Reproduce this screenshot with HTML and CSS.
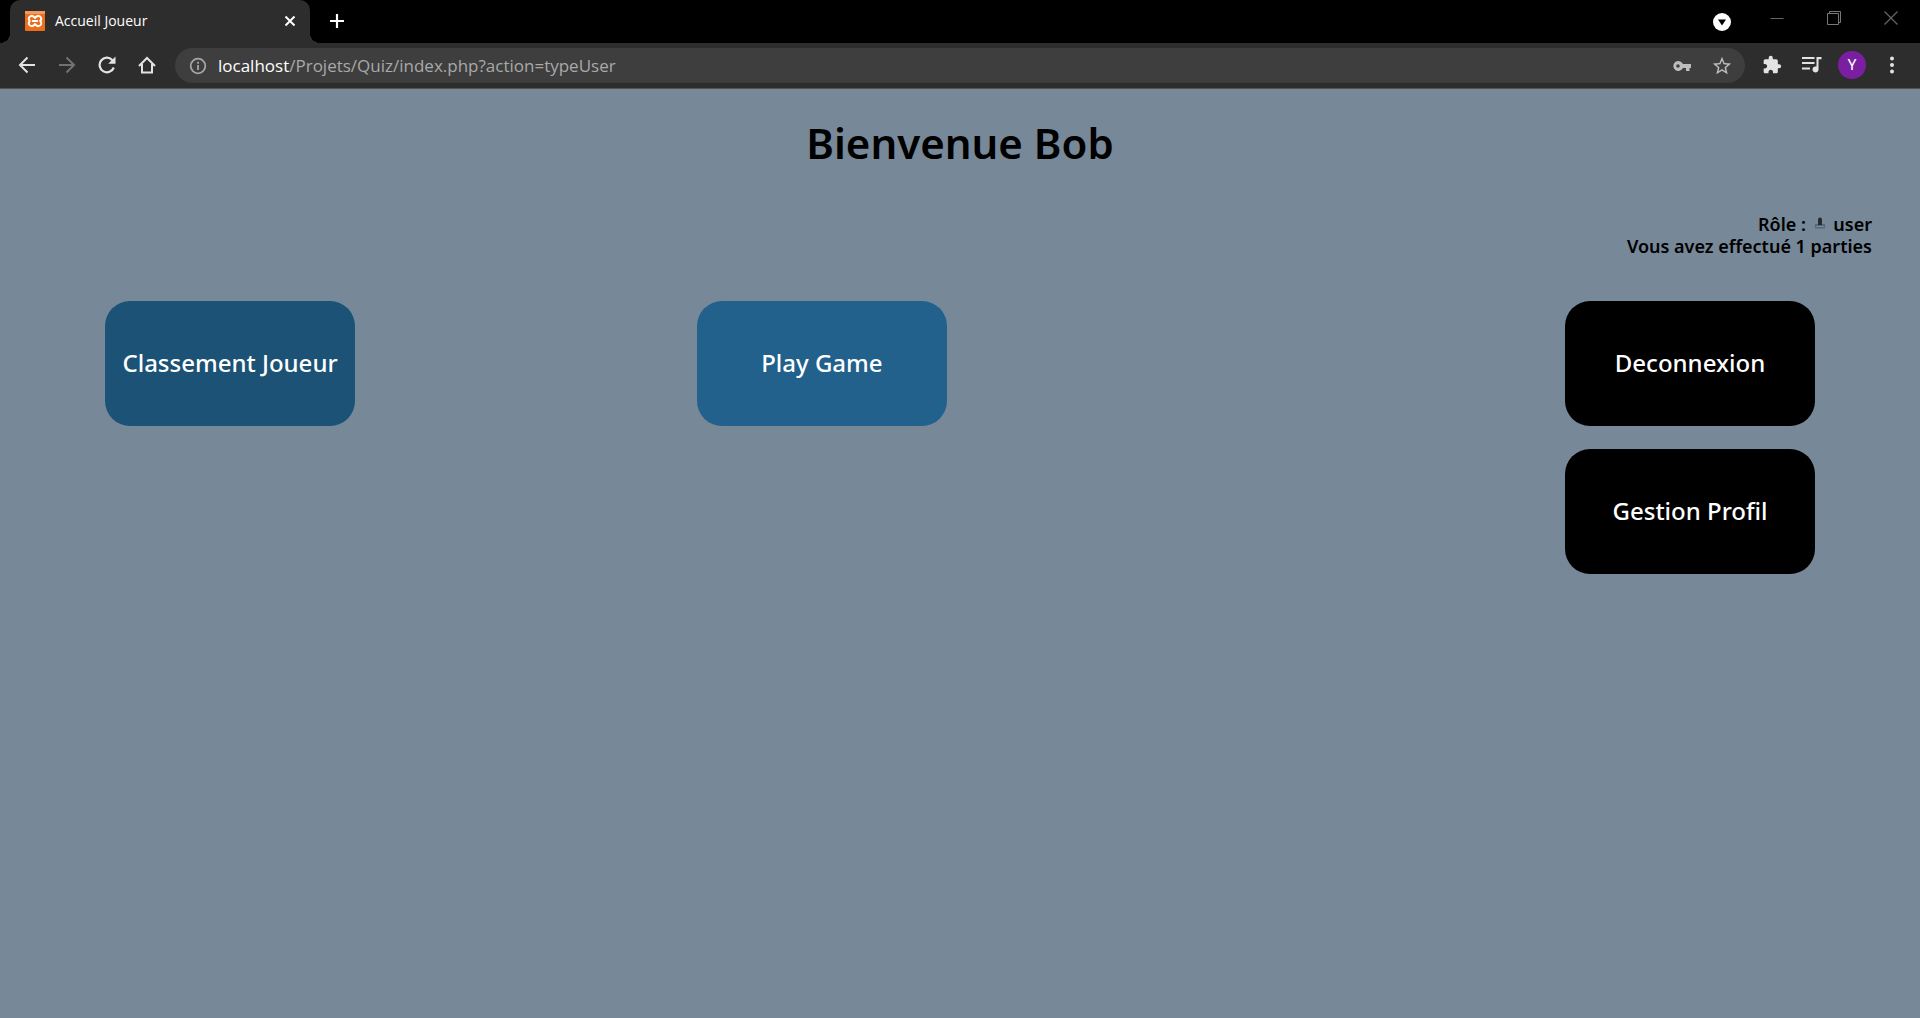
FILE: index.html
```html
<!DOCTYPE html>
<html lang="fr">
<head>
<meta charset="utf-8">
<meta name="viewport" content="width=device-width, initial-scale=1">
<title>Accueil Joueur</title>
<link rel="stylesheet" href="styles.css">
</head>
<body>
<header class="browser">
  <div class="tabstrip">
    <div class="tab">
      <svg class="favicon" viewBox="0 0 20 20" width="20" height="20" aria-hidden="true">
        <rect width="20" height="20" rx="1" fill="#ee6d1a"/>
        <rect width="20" height="3" fill="#f59a5c"/>
        <path d="M10 7C8.500 4.800 6.500 4.600 5 5.500S3.200 8.500 4.800 10C3.200 11.500 3.500 13.600 5 14.500S8.500 15.200 10 13C11.500 15.200 13.500 15.400 15 14.500S16.800 11.500 15.200 10C16.800 8.500 16.500 6.400 15 5.500S11.500 4.800 10 7zM7.800 10h4.400" fill="none" stroke="#fff" stroke-width="2" stroke-linecap="round" stroke-linejoin="round"/>
      </svg>
      <span class="tab-title">Accueil Joueur</span>
      <button class="icon-btn tab-close" aria-label="Fermer l'onglet">
        <svg viewBox="0 0 12 12" width="12" height="12"><path d="M1.500 1.500l9 9m0-9l-9 9" stroke="#fff" stroke-width="2"/></svg>
      </button>
    </div>
    <button class="icon-btn new-tab" aria-label="Nouvel onglet">
      <svg viewBox="0 0 16 16" width="16" height="16"><path d="M8 1v14M1 8h14" stroke="#fff" stroke-width="2.200"/></svg>
    </button>
    <div class="window-controls">
      <button class="icon-btn" aria-label="Rechercher dans les onglets">
        <svg viewBox="0 0 18 18" width="18" height="18"><circle cx="9" cy="9" r="9" fill="#fff"/><path d="M5 6.500h8L9 12.500z" fill="#000"/></svg>
      </button>
      <button class="icon-btn caption" aria-label="Réduire">
        <svg viewBox="0 0 14 14" width="14" height="14"><path d="M.5 7.500h13" stroke="#666"/></svg>
      </button>
      <button class="icon-btn caption" aria-label="Niveau inférieur">
        <svg viewBox="0 0 14 14" width="14" height="14" fill="none" stroke="#777"><path d="M.5 2.500h11v11h-11zM2.500 2.500v-2h11v11h-2"/></svg>
      </button>
      <button class="icon-btn caption" aria-label="Fermer">
        <svg viewBox="0 0 14 14" width="14" height="14"><path d="M.5.5l13 13m0-13l-13 13" stroke="#666" stroke-width="1.200"/></svg>
      </button>
    </div>
  </div>
  <div class="toolbar">
    <nav class="nav" aria-label="Navigation">
      <button class="icon-btn tool" aria-label="Retour">
        <svg viewBox="0 0 18 18" width="18" height="18" fill="none" stroke="#e3e3e3" stroke-width="2"><path d="M17 9H2.500M9.500 1.500L2 9l7.500 7.500"/></svg>
      </button>
      <button class="icon-btn tool" aria-label="Avancer">
        <svg viewBox="0 0 18 18" width="18" height="18" fill="none" stroke="#727272" stroke-width="2"><path d="M1 9h14.500M8.500 1.500L16 9l-7.500 7.500"/></svg>
      </button>
      <button class="icon-btn tool" aria-label="Actualiser">
        <svg viewBox="0 0 18 18" width="18" height="18"><path d="M15.800 11.500A7.300 7.300 0 1 1 14.200 3.900L15.500 5.300" fill="none" stroke="#e3e3e3" stroke-width="2.200"/><path d="M17.500.5v7.300h-7.300z" fill="#e3e3e3"/></svg>
      </button>
      <button class="icon-btn tool" aria-label="Accueil">
        <svg viewBox="0 0 18 18" width="18" height="18"><path d="M1 10L9 2l8 8M4 8v8.500h10V8" fill="none" stroke="#e3e3e3" stroke-width="2"/></svg>
      </button>
    </nav>
    <div class="omnibox">
      <svg class="info" viewBox="0 0 18 18" width="18" height="18" aria-hidden="true"><circle cx="9" cy="9" r="7.300" fill="none" stroke="#a3a6a9" stroke-width="1.800"/><path d="M9 8v5M9 4.800v1.900" stroke="#a3a6a9" stroke-width="1.800"/></svg>
      <label class="host" for="url">localhost</label>
      <input class="url" id="url" type="text" value="/Projets/Quiz/index.php?action=typeUser" spellcheck="false">
      <button class="icon-btn tool" aria-label="Mots de passe">
        <svg viewBox="0 0 18 18" width="18" height="18"><path fill="#bdbdbd" fill-rule="evenodd" d="M9.900 7A5 5 0 1 0 9.900 11H13v3h3.500v-3H18V7zM5 7.200a1.800 1.800 0 1 1 0 3.600 1.800 1.800 0 0 1 0-3.600z"/></svg>
      </button>
      <button class="icon-btn tool" aria-label="Ajouter aux favoris">
        <svg viewBox="0 0 24 24" width="22" height="22"><path fill="#bdbdbd" d="M22 9.240l-7.190-.62L12 2 9.190 8.630 2 9.240l5.460 4.730L5.820 21 12 17.270 18.180 21l-1.630-7.030L22 9.240zM12 15.400l-3.760 2.270 1-4.280-3.320-2.880 4.380-.38L12 6.100l1.710 4.040 4.380.38-3.320 2.880 1 4.280L12 15.400z"/></svg>
      </button>
    </div>
    <div class="actions">
      <button class="icon-btn tool" aria-label="Extensions">
        <svg viewBox="0 0 24 24" width="20" height="20"><path fill="#e3e3e3" d="M20.500 11H19V7c0-1.100-.9-2-2-2h-4V3.500a2.500 2.500 0 0 0-5 0V5H4c-1.100 0-1.990.9-1.990 2v3.800H3.500c1.490 0 2.700 1.210 2.700 2.700s-1.210 2.700-2.700 2.700H2V20c0 1.100.9 2 2 2h3.800v-1.500c0-1.490 1.210-2.700 2.700-2.700s2.700 1.210 2.700 2.700V22H17c1.100 0 2-.9 2-2v-4h1.500a2.500 2.500 0 0 0 0-5z"/></svg>
      </button>
      <button class="icon-btn tool" aria-label="Contrôle multimédia">
        <svg viewBox="0 0 20 18" width="20" height="18"><path d="M0 2h12.500M0 7h12.500M0 12.500h8" stroke="#e3e3e3" stroke-width="2"/><path d="M19.500 1h-5v9.600a3 3 0 1 0 2 2.800V3.200h3z" fill="#e3e3e3"/></svg>
      </button>
      <button class="icon-btn avatar" aria-label="Profil">Y</button>
      <button class="icon-btn tool" aria-label="Menu">
        <svg viewBox="0 0 4 18" width="4" height="18" fill="#e3e3e3"><circle cx="2" cy="2.500" r="2"/><circle cx="2" cy="9" r="2"/><circle cx="2" cy="15.500" r="2"/></svg>
      </button>
    </div>
  </div>
</header>
<main class="page">
  <h1 class="title">Bienvenue Bob</h1>
  <p class="status">Rôle : <svg class="stamp" viewBox="0 0 10 12" width="10" height="12" aria-hidden="true"><path d="M0 11.500V7h10v4.500z" fill="#5b6876"/><path d="M1 10h8v-1H1z" fill="#778899"/><path d="M3 8V2.500a2 2 0 1 1 4 0V8z" fill="#262b31"/></svg> user<br>Vous avez effectué 1 parties</p>
  <div class="menu">
    <button class="card ranking">Classement Joueur</button>
    <button class="card play">Play Game</button>
    <div class="account">
      <button class="card">Deconnexion</button>
      <button class="card">Gestion Profil</button>
    </div>
  </div>
</main>
</body>
</html>
```
FILE: styles.css
```css
* {
  box-sizing: border-box;
}

body {
  margin: 0;
  min-height: 100vh;
  background: #778899;
  color: #000;
  font-family: "Trebuchet MS", "Noto Sans", sans-serif;
}

button,
input {
  margin: 0;
  padding: 0;
  border: 0;
  font: inherit;
}

svg {
  flex: none;
}

/* Browser frame */
.browser {
  background: #2d2d2d;
  border-bottom: 1px solid #58534e;
  font-family: "Segoe UI", "Open Sans", sans-serif;
}

.tabstrip {
  display: flex;
  align-items: flex-start;
  height: 43px;
  padding-left: 10px;
  background: #000;
}

.tab {
  position: relative;
  display: flex;
  align-items: center;
  width: 300px;
  height: 43px;
  padding: 0 12px 2px 15px;
  border-radius: 10px 10px 0 0;
  background: #2d2d2d;
}

.tab::before,
.tab::after {
  content: "";
  position: absolute;
  bottom: 0;
  width: 10px;
  height: 10px;
}

.tab::before {
  right: 100%;
  background: radial-gradient(circle at 0 0, #000 10px, #2d2d2d 10px);
}

.tab::after {
  left: 100%;
  background: radial-gradient(circle at 100% 0, #000 10px, #2d2d2d 10px);
}

.tab-title {
  flex: 1;
  margin-left: 10px;
  color: #fff;
  font-size: 14px;
}

.icon-btn {
  display: flex;
  flex: none;
  align-items: center;
  justify-content: center;
  background: none;
  color: #fff;
}

.tab-close {
  width: 16px;
  height: 16px;
}

.new-tab {
  width: 36px;
  height: 36px;
  margin: 3px 0 0 9px;
}

.window-controls {
  display: flex;
  align-items: center;
  height: 43px;
  margin-left: auto;
}

.caption {
  width: 57px;
  height: 36px;
  padding: 0 2px 7px 0;
}

.window-controls .icon-btn:first-child {
  margin-right: 18px;
}

.toolbar {
  display: flex;
  align-items: center;
  height: 45px;
  padding: 0 8px 1px 7px;
}

.nav,
.actions {
  display: flex;
  align-items: center;
}

.tool {
  width: 40px;
  height: 36px;
}

.omnibox {
  display: flex;
  flex: 1;
  align-items: center;
  height: 35px;
  margin: 1px 7px 0 8px;
  padding: 0 3px 0 14px;
  border-radius: 18px;
  background: #3e3e3e;
  font-size: 17px;
}

.host {
  margin-left: 11px;
  color: #fff;
}

.url {
  flex: 1;
  min-width: 0;
  background: none;
  color: #a9a9a9;
}

.avatar {
  width: 28px;
  height: 28px;
  margin: 0 6px;
  border-radius: 50%;
  background: #7b1fa2;
  font-family: Roboto, sans-serif;
  font-size: 15px;
}

/* Page */
.title {
  margin: 0;
  padding-top: 24px;
  font-size: 42px;
  font-weight: 600;
  line-height: 60px;
  text-align: center;
}

.status {
  margin: 40px 48px 0 0;
  font-size: 18px;
  font-weight: 600;
  line-height: 22px;
  text-align: right;
}

.stamp {
  margin: 0 4px 2px;
}

.menu {
  display: grid;
  grid-template-columns: 15fr 22fr 250px;
  align-items: start;
  padding: 44px 105px;
}

.account {
  display: grid;
  gap: 23px;
}

.card {
  width: 250px;
  height: 125px;
  padding-bottom: 2px;
  border-radius: 25px;
  background: #000;
  color: #fff;
  font-size: 24px;
  font-weight: 500;
}

.ranking {
  background: #1b5276;
}

.play {
  background: #21618c;
}
```
